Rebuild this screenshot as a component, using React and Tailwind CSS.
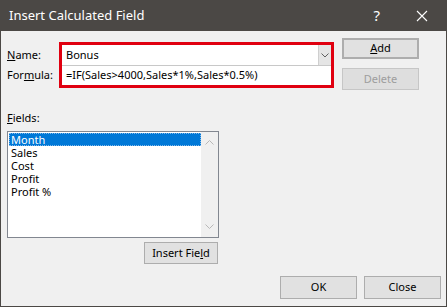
import React from 'react';

const Btn = ({ children, className = '' }) => (
    <div className={`flex items-center justify-center bg-[#e1e1e1] border border-[#adadad] ${className}`}>
        {children}
    </div>
);

const fields = ['Month', 'Sales', 'Cost', 'Profit', 'Profit %'];

export default function App() {
    return (
        <div className="w-[447px] h-[307px] flex flex-col font-['Noto_Sans',sans-serif] text-[11px] text-black">
            {/* Title bar */}
            <div className="h-[31px] shrink-0 bg-[#4b4845] text-white flex items-center pl-[9px]">
                <span className="text-[13px] flex-1">Insert Calculated Field</span>
                <span className="text-[15px] mr-[36px]">?</span>
                <svg width="12" height="12" viewBox="0 0 12 12" className="mr-[19px]">
                    <path d="M1 1 L11 11 M11 1 L1 11" stroke="white" strokeWidth="1.1" />
                </svg>
            </div>

            {/* Body */}
            <div className="flex-1 bg-[#f0f0f0] border-x border-b border-[#4b4845] pl-[6px] pr-[5px] flex flex-col">
                <div className="flex mt-[7px]">
                    <div className="flex flex-col w-[52px] pt-[7px]">
                        <div className="h-[20px] flex items-center"><span><u>N</u>ame:</span></div>
                        <div className="h-[20px] flex items-center"><span>For<u>m</u>ula:</span></div>
                    </div>
                    <div className="mt-[4px] w-[275px] h-[46px] border-[3px] border-[#e00010] flex flex-col">
                        <div className="h-[21px] bg-white flex border-b border-[#c8c8c8]">
                            <span className="flex-1 pl-[4px] leading-[20px]">Bonus</span>
                            <div className="w-[13px] bg-[#e5e5e5] border-l border-[#cfcfcf] flex items-center justify-center">
                                <svg width="8" height="5" viewBox="0 0 8 5">
                                    <path d="M0.5 0.5 L4 4 L7.5 0.5" fill="none" stroke="#606060" strokeWidth="1" />
                                </svg>
                            </div>
                        </div>
                        <div className="flex-1 bg-white pl-[4px] leading-[18px]">=IF(Sales&gt;4000,Sales*1%,Sales*0.5%)</div>
                    </div>
                    <div className="ml-[8px] flex flex-col">
                        <Btn className="w-[77px] h-[21px] border-2 border-[#0078d7]"><span><u>A</u>dd</span></Btn>
                        <div className="mt-[9px] w-[77px] h-[22px] flex items-center justify-center bg-[#dedede] border border-[#c6c6c6] text-[#9d9d9d]">Delete</div>
                    </div>
                </div>

                <div className="mt-[20px] leading-[15px]"><u>F</u>ields:</div>
                <div className="mt-[6px] w-[212px] h-[107px] border border-[#828790] bg-white flex">
                    <div className="flex-1 pl-[1px] pt-[1px] flex flex-col">
                        {fields.map((f, i) => (
                            <div
                                key={f}
                                className={`h-[13px] leading-[13px] px-[2px] ${i === 0 ? 'bg-[#0078d7] text-white outline outline-1 outline-dotted outline-[#7fb8ea] -outline-offset-1' : ''}`}
                            >
                                {f}
                            </div>
                        ))}
                    </div>
                    <div className="w-[17px] bg-[#f0f0f0] flex flex-col justify-between items-center py-[8px]">
                        <svg width="9" height="5" viewBox="0 0 9 5">
                            <path d="M0.5 4.5 L4.5 0.5 L8.5 4.5" fill="none" stroke="#b8b8b8" strokeWidth="1" />
                        </svg>
                        <svg width="9" height="5" viewBox="0 0 9 5">
                            <path d="M0.5 0.5 L4.5 4.5 L8.5 0.5" fill="none" stroke="#b8b8b8" strokeWidth="1" />
                        </svg>
                    </div>
                </div>
                <Btn className="mt-[4px] ml-[137px] w-[74px] h-[22px]"><span>Insert Fie<u>l</u>d</span></Btn>

                <div className="mt-[12px] flex justify-end">
                    <Btn className="w-[77px] h-[23px]">OK</Btn>
                    <Btn className="ml-[7px] w-[77px] h-[23px]">Close</Btn>
                </div>
            </div>
        </div>
    );
}
